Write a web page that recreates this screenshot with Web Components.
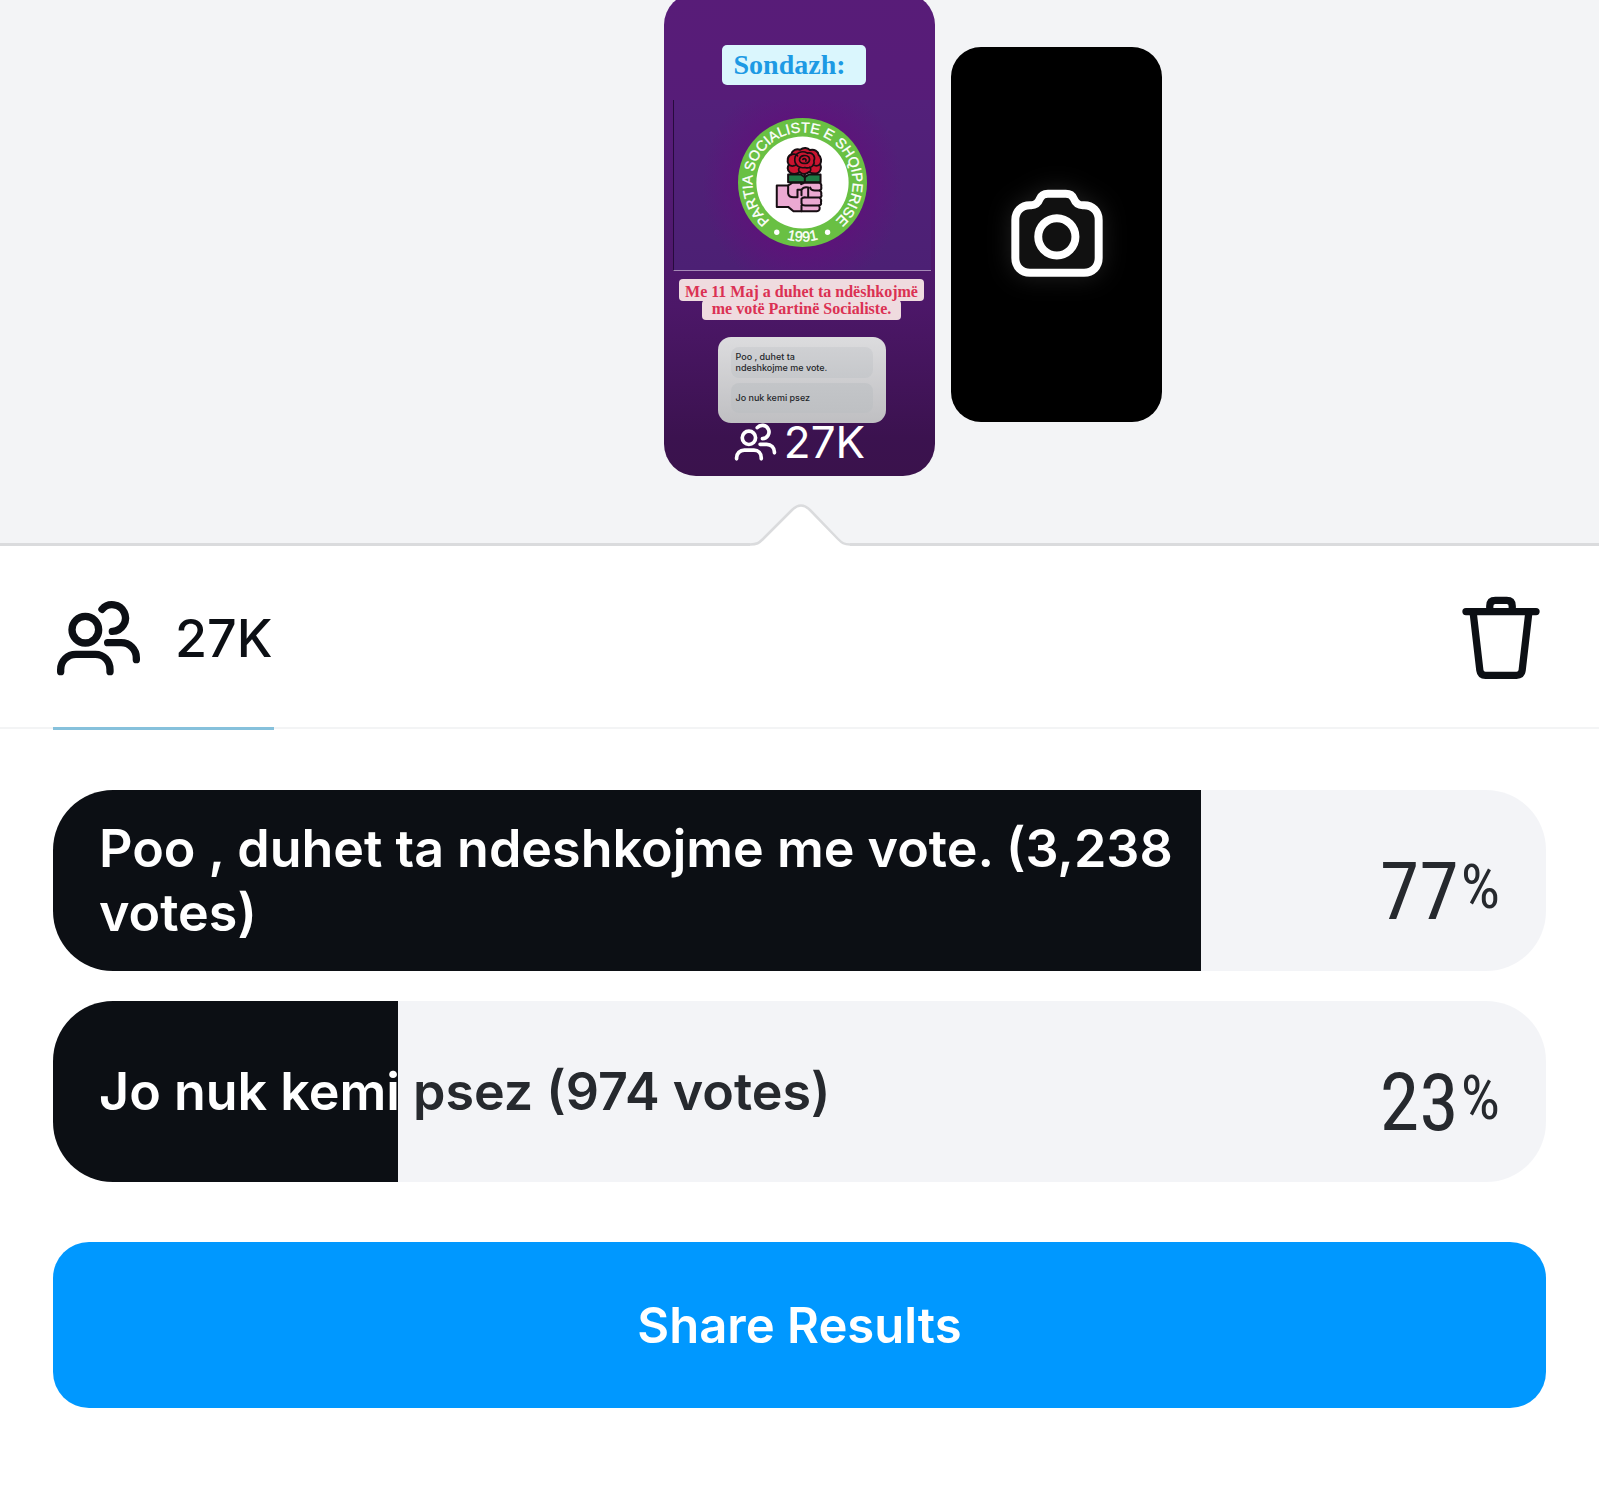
<!DOCTYPE html>
<html lang="sq">
<head>
<meta charset="utf-8">
<meta name="viewport" content="width=device-width, initial-scale=1">
<title>Story insights</title>
<style>
body { margin: 0; background: #fff; color: #0c0f14; font-family: Inter, "Liberation Sans", sans-serif; }
</style>
</head>
<body>
<story-insights>
  <story-tray slot="tray">
    <story-card slot="current" viewers="27K">
      <span slot="title">Sondazh:</span>
      <party-emblem slot="media"></party-emblem>
      <span slot="question">Me 11 Maj a duhet ta ndëshkojmë</span>
      <span slot="question-end">me votë Partinë Socialiste.</span>
      <span slot="first">Poo , duhet ta<br>ndeshkojme me vote.</span>
      <span slot="second">Jo nuk kemi psez</span>
    </story-card>
    <camera-card slot="next"></camera-card>
  </story-tray>
  <insight-tabs slot="tabs">27K</insight-tabs>
  <poll-result votes="3238" total="4212"><span class="covered">Poo , duhet ta ndeshkojme me vote. (3,238 votes)</span></poll-result>
  <poll-result votes="974" total="4212"><span class="covered">Jo nuk kemi</span> psez (974 votes)</poll-result>
  <share-button slot="action">Share Results</share-button>
</story-insights>

<script>
function define(name, html, setup) {
  const template = document.createElement('template');
  template.innerHTML = html;
  customElements.define(name, class extends HTMLElement {
    constructor() {
      super();
      this.attachShadow({ mode: 'open' }).append(template.content.cloneNode(true));
    }
    connectedCallback() { if (setup) setup(this, this.shadowRoot); }
  });
}

define('story-insights', `
<style>
  :host { display: block; }
  .results { display: flex; flex-direction: column; gap: 30px; padding: 61px 53px 60px; }
  .action { padding: 0 53px 60px; }
</style>
<slot name="tray"></slot>
<slot name="tabs"></slot>
<main>
  <div class="results"><slot></slot></div>
  <div class="action"><slot name="action"></slot></div>
</main>`);

define('story-tray', `
<style>
  :host { display: block; background: #f3f4f6; overflow: hidden; }
  .row { display: grid; grid-template-columns: 1fr auto 1fr; column-gap: 16px; align-items: center; margin-top: -7px; }
  .current { grid-column: 2; }
  .edge { display: flex; margin-top: 26px; }
  .line { flex: 1; align-self: flex-end; height: 3px; background: #dadbdd; }
  svg { display: block; width: 100px; height: 44px; }
</style>
<div class="row">
  <div class="current"><slot name="current"></slot></div>
  <slot name="next"></slot>
</div>
<div class="edge">
  <div class="line"></div>
  <svg viewBox="0 0 100 44" aria-hidden="true">
    <path d="M0 44V42.500C7 42.500 9 41 13 37L42 8Q51-2 60 8L88 37C92 41 94 42.500 100 42.500V44Z" fill="#fff"/>
    <path d="M0 42.500C7 42.500 9 41 13 37L42 8Q51-1 60 8L88 37C92 41 94 42.500 100 42.500" fill="none" stroke="#dadbdd" stroke-width="2.500"/>
  </svg>
  <div class="line"></div>
</div>`);

define('people-icon', `
<style>
  :host { display: block; width: 85px; height: 76px; }
  svg { display: block; width: 100%; height: 100%; }
</style>
<svg viewBox="78 88 255 228" fill="none" stroke="currentColor" stroke-width="22" stroke-linecap="round" aria-hidden="true">
  <circle cx="166" cy="177" r="40"/>
  <path d="M216 116A40 40 0 1 1 247 182"/>
  <path d="M92 303V297C92 271 112 251 138 251H196C222 251 240 271 240 297V303"/>
  <path d="M233 216H273C299 216 319 236 319 262V267"/>
</svg>`);

define('party-emblem', `
<style>
  :host { display: block; width: 129px; height: 129px; }
  svg { display: block; width: 100%; height: 100%; }
  text { font-family: "Liberation Sans", Arial, sans-serif; font-size: 43px; fill: #fff; stroke: #fff; stroke-width: 1; }
</style>
<svg viewBox="54 38 386 386" role="img" aria-label="Partia Socialiste e Shqiperise">
  <defs>
    <path id="ring" d="M247 381A150 150 0 1 1 247.100 381"/>
    <path id="base" d="M92 316A177 177 0 0 0 402 316"/>
  </defs>
  <circle cx="247" cy="231" r="193" fill="#69c043"/>
  <circle cx="247" cy="231" r="138" fill="#fff"/>
  <text text-anchor="middle"><textPath href="#ring" startOffset="50%">PARTIA SOCIALISTE E SHQIPERISE</textPath></text>
  <text text-anchor="middle"><textPath href="#base" startOffset="50%">1991</textPath></text>
  <circle cx="170" cy="380" r="8" fill="#fff"/>
  <circle cx="322" cy="380" r="8" fill="#fff"/>
  <g stroke="#160d12" stroke-width="6" stroke-linejoin="round" stroke-linecap="round">
    <path d="M204 207H242L254 215L266 207H301V230H204Z" fill="#1d7a45"/>
    <path d="M254 206V232" fill="none"/>
    <path d="M210 202C199 194 203 182 206 178C199 166 203 150 213 147C216 133 230 129 240 133C250 125 263 127 269 134C282 130 294 137 295 148C304 155 304 168 300 176C304 186 302 198 293 202C284 206 273 203 266 200C257 207 246 206 239 200C230 206 218 206 210 202Z" fill="#c9142f"/>
    <path d="M224 160C225 142 246 134 261 143C278 139 287 154 281 166C285 181 269 191 254 186C237 190 222 178 224 160ZM238 162C240 149 258 147 266 155C272 165 264 175 253 174C243 174 237 169 238 162ZM248 162C253 157 260 161 257 167M213 148C222 143 230 148 232 151M206 178C214 184 222 182 228 178M300 176C291 184 284 182 279 177M239 200C233 195 235 188 240 185M266 200C273 196 273 190 269 185" fill="none" stroke-width="5"/>
    <path d="M170 240H204L216 232H243V236L252 232H298Q305 235 303 244Q305 252 299 255Q305 260 303 267Q306 273 299 277Q305 283 302 290Q305 297 297 300Q302 316 290 317H220L204 304H170Z" fill="#eba9d2"/>
    <path d="M204 240V264Q206 275 220 275H232V253H244V269M244 253Q250 243 264 246V272M270 246Q272 255 284 255H299M244 280Q248 274 258 276H299M244 280V294Q246 300 255 300H297M244 300V317" fill="none"/>
  </g>
</svg>`);

define('story-card', `
<style>
  :host { display: block; }
  article {
    display: flex; flex-direction: column; align-items: center; box-sizing: border-box;
    width: 271px; height: 483px; padding: 52px 0 0 4px; border-radius: 32px; color: #fff;
    background: linear-gradient(#581c78, #561c78 30%, #4c1768 65%, #3b124f 92%, #3a124c);
  }
  .title {
    box-sizing: border-box; width: 144px; height: 40px; margin-right: 16px; padding-left: 12px; border-radius: 5px;
    background: #daf6fd; color: #1d9ae4; font: bold 28px/40px "Liberation Serif", "Times New Roman", serif;
  }
  .media {
    display: flex; align-items: center; justify-content: center; box-sizing: border-box;
    width: 258px; height: 171px; margin-top: 15px; padding-bottom: 6px;
    border-left: 1px solid #260b3c; border-bottom: 1px solid #a689b8;
    background:
      radial-gradient(ellipse 100px 110px at 50% 50%, #620f7b 40%, #620f7b00),
      linear-gradient(#53207a, #4c2074);
  }
  .question {
    display: flex; flex-direction: column; align-items: center; margin: 8px 0 0;
    font: bold 16px/17px "Liberation Serif", "Times New Roman", serif; color: #db3153;
  }
  .question span { margin-top: -1px; padding: 0 10px 3px; border-radius: 4px; background: #efdbdf; }
  .question .start { z-index: 1; margin-top: 0; padding: 4px 6px 1px; }
  .poll {
    display: flex; flex-direction: column; gap: 5px; box-sizing: border-box; width: 168px; height: 86px;
    margin-top: 17px; padding: 10px 13px; border-radius: 13px; background: linear-gradient(#dcdcde, #bfbfc2);
  }
  .option {
    display: flex; flex: 1; align-items: center; padding-left: 5px; border-radius: 8px;
    background: linear-gradient(#cfd0d3, #c6c8cb); color: #24262a; font-size: 9px; line-height: 11px; font-weight: 500;
  }
  .option + .option { background: linear-gradient(#c3c5c8, #bec0c3); }
  .viewers { display: flex; align-items: center; gap: 7px; padding-right: 4px; font-size: 44px; line-height: 38px; font-weight: 400; }
  people-icon { width: 43px; height: 38px; }
</style>
<article>
  <div class="title"><slot name="title"></slot></div>
  <div class="media"><slot name="media"></slot></div>
  <p class="question">
    <span class="start"><slot name="question"></slot></span>
    <span><slot name="question-end"></slot></span>
  </p>
  <div class="poll">
    <div class="option"><slot name="first"></slot></div>
    <div class="option"><slot name="second"></slot></div>
  </div>
  <div class="viewers"><people-icon></people-icon><span class="count"></span></div>
</article>`, (host, root) => {
  root.querySelector('.count').textContent = host.getAttribute('viewers');
});

define('camera-card', `
<style>
  :host { display: block; }
  button {
    display: flex; align-items: center; justify-content: center; width: 211px; height: 375px;
    padding: 0 0 2px; border: 0; border-radius: 30px; background: #000; color: #fff;
  }
  svg { width: 96px; height: 91px; filter: drop-shadow(0 0 12px #ffffff20); }
</style>
<button type="button" aria-label="Open camera">
  <svg viewBox="206 472 287 274" fill="none" stroke="currentColor" stroke-width="24" aria-hidden="true">
    <path fill="#111" d="M322 489H376C387 489 396 494 400 504C405 517 414 524 427 524H431C457 524 475 542 475 568V683C475 709 457 727 431 727H268C242 727 224 709 224 683V568C224 542 242 524 268 524H272C285 524 293 517 298 504C302 494 311 489 322 489Z"/>
    <circle cx="349" cy="619" r="56"/>
  </svg>
</button>`);

define('insight-tabs', `
<style>
  :host { display: block; }
  nav { display: flex; justify-content: space-between; align-items: stretch; height: 178px; padding: 3px 53px 0; border-bottom: 2px solid #f3f4f5; }
  button { display: flex; align-items: center; padding: 0 1px 0 3px; border: 0; background: none; color: inherit; font: inherit; }
  .viewers { gap: 34px; margin-bottom: -3px; border-bottom: 3px solid #86c1dc; font-size: 52px; font-weight: 500; }
  .delete { padding: 0 6px; }
  svg { width: 78px; height: 84px; }
</style>
<nav>
  <button class="viewers" type="button"><people-icon></people-icon><span><slot></slot></span></button>
  <button class="delete" type="button" aria-label="Delete story">
    <svg viewBox="126 78 236 254" fill="none" stroke="currentColor" stroke-width="22" stroke-linecap="round" stroke-linejoin="round" aria-hidden="true">
      <path d="M138 125H350M210 118V108Q210 91 227 91H261Q278 91 278 108V118"/>
      <path d="M160 130L180 303Q182 318 197 318H291Q306 318 308 303L328 130"/>
    </svg>
  </button>
</nav>`);

define('poll-result', `
<style>
  :host { display: block; }
  .bar {
    display: flex; align-items: center; gap: 80px; box-sizing: border-box; min-height: 181px; padding: 24px 46px;
    border-radius: 60px; color: #26292e;
    background: linear-gradient(to right, #0c0f14 var(--share), #f3f4f7 var(--share));
  }
  .label { flex: 1; font-size: 52px; line-height: 64px; font-weight: 600; }
  ::slotted(.covered) { color: #fff; }
  .percent { display: flex; align-items: flex-start; gap: 2px; padding-top: 22px; font-family: "Roboto Condensed", "Noto Sans Mono CJK SC", "Noto Sans CJK SC", Roboto, sans-serif; }
  .value { font-size: 80px; line-height: 90px; }
  .sign { font-size: 62px; line-height: 80px; }
</style>
<div class="bar">
  <div class="label"><slot></slot></div>
  <div class="percent"><span class="value"></span><span class="sign">%</span></div>
</div>`, (host, root) => {
  const share = host.getAttribute('votes') / host.getAttribute('total') * 100;
  root.querySelector('.value').textContent = Math.round(share);
  root.querySelector('.bar').style.setProperty('--share', share + '%');
});

define('share-button', `
<style>
  :host { display: block; }
  button {
    display: block; width: 100%; height: 166px; padding: 0; border: 0; border-radius: 36px;
    background: #0098ff; color: #fff; font: inherit; font-size: 49px; font-weight: 600;
  }
</style>
<button type="button"><slot></slot></button>`);
</script>
</body>
</html>
